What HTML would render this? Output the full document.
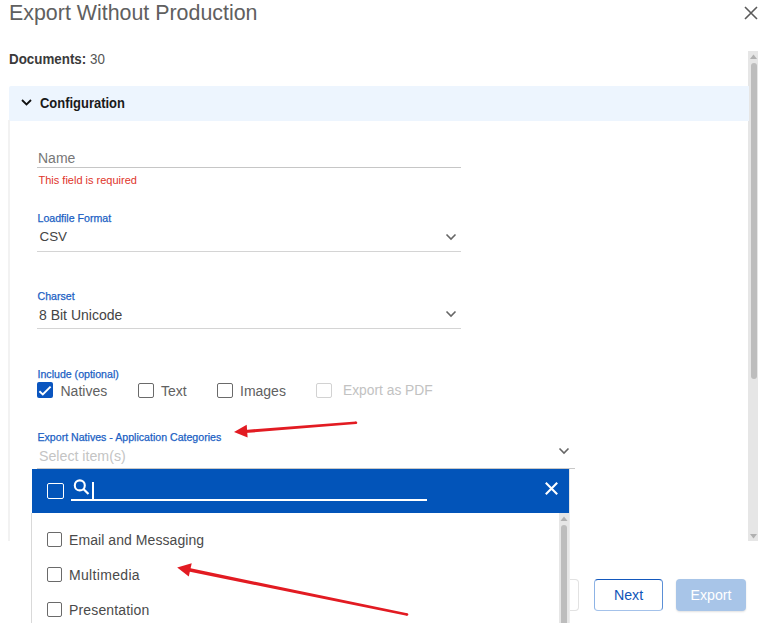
<!DOCTYPE html>
<html><head><meta charset="utf-8">
<style>
*{box-sizing:border-box;margin:0;padding:0}
html,body{width:774px;height:642px;overflow:hidden;background:#fff;font-family:"Liberation Sans",sans-serif;position:relative}
.a{position:absolute;white-space:nowrap}
.title{left:9px;top:1px;font-size:21.4px;color:#606060;line-height:24px}
.docs{left:9px;top:50.8px;font-size:14.5px;color:#555;line-height:16px;transform:scaleX(0.922);transform-origin:0 50%}
.docs b{color:#3a3a3a}
.band{left:8.5px;top:86px;width:740.2px;border-top-left-radius:2px;height:34.5px;background:#edf5fe}
.cfg{left:40px;top:95px;font-size:14px;font-weight:bold;color:#1a1a1a;line-height:16px;transform:scaleX(0.925);transform-origin:0 50%}
.pleft{left:8px;top:120px;width:2px;height:421px;background:#f2f2f2}
.lbl{font-size:10.6px;color:#1b5fc4;line-height:12px;-webkit-text-stroke:0.25px #1b5fc4}
.val{font-size:14px;color:#444;line-height:16px}
.uline{height:1px;background:#d4d4d4}
.cb{width:15.5px;height:15px;border:1.75px solid #6a6a6a;border-radius:2px;background:#fff}
.item{font-size:14px;color:#4a4a4a;line-height:16px}
.btn{height:32px;border-radius:4px;font-size:14px;line-height:30px;text-align:center}
</style></head><body>
<div class="a title">Export Without Production</div>
<svg class="a" style="left:744px;top:6px" width="14" height="14" viewBox="0 0 14 14"><path d="M1 1L13 13M13 1L1 13" stroke="#5a5a5a" stroke-width="1.6"/></svg>
<div class="a docs"><b>Documents:</b> 30</div>

<!-- main scrollbar -->
<div class="a" style="left:748px;top:51px;width:10px;height:490px;background:#e6e6e6"></div>
<svg class="a" style="left:749px;top:53px" width="9" height="7" viewBox="0 0 9 7"><path d="M1 6L4.5 1.5L8 6Z" fill="#b0b0b0"/></svg>
<div class="a" style="left:751px;top:63px;width:6px;height:316px;background:#bdbdbd;border-radius:3px"></div>
<svg class="a" style="left:749px;top:533px" width="9" height="7" viewBox="0 0 9 7"><path d="M1 1L4.5 5.5L8 1Z" fill="#b0b0b0"/></svg>

<div class="a band"></div>
<svg class="a" style="left:21px;top:99px" width="11" height="7" viewBox="0 0 11 7"><path d="M1 1L5.5 5.5L10 1" stroke="#111" stroke-width="1.8" fill="none"/></svg>
<div class="a cfg">Configuration</div>
<div class="a pleft"></div>

<div class="a" style="left:38px;top:150px;font-size:14px;color:#777;line-height:16px">Name</div>
<div class="a uline" style="left:37px;top:167px;width:424px;background:#c6c6c6"></div>
<div class="a" style="left:38.5px;top:173.7px;font-size:11px;color:#e0342a;line-height:12px">This field is required</div>

<div class="a lbl" style="left:37.5px;top:211.9px">Loadfile Format</div>
<div class="a val" style="left:39.5px;top:229px;font-size:13.4px">CSV</div>
<svg class="a" style="left:445px;top:233px" width="12" height="8" viewBox="0 0 12 8"><path d="M1.5 1.5L6 6L10.5 1.5" stroke="#666" stroke-width="1.6" fill="none"/></svg>
<div class="a uline" style="left:37px;top:251px;width:424px"></div>

<div class="a lbl" style="left:37.5px;top:290px">Charset</div>
<div class="a val" style="left:39px;top:306.5px">8 Bit Unicode</div>
<svg class="a" style="left:445px;top:310px" width="12" height="8" viewBox="0 0 12 8"><path d="M1.5 1.5L6 6L10.5 1.5" stroke="#666" stroke-width="1.6" fill="none"/></svg>
<div class="a uline" style="left:37px;top:328px;width:424px"></div>

<div class="a lbl" style="left:37.5px;top:367.9px">Include (optional)</div>
<div class="a" style="left:37px;top:382px;width:16px;height:16px;background:#0a55bf;border-radius:2px"></div>
<svg class="a" style="left:37px;top:382px" width="16" height="16" viewBox="0 0 16 16"><path d="M2.4 9.25L5.8 12.4L13.6 4.6" stroke="#fff" stroke-width="1.9" fill="none"/></svg>
<div class="a val" style="left:60.5px;top:382.5px;color:#616161">Natives</div>
<div class="a cb" style="left:138px;top:382.5px"></div>
<div class="a val" style="left:161px;top:382.5px;color:#616161">Text</div>
<div class="a cb" style="left:217px;top:382.5px"></div>
<div class="a val" style="left:240px;top:382.5px;color:#616161">Images</div>
<div class="a cb" style="left:316px;top:382.5px;border-color:#d2d2d2"></div>
<div class="a val" style="left:343px;top:382.5px;color:#c2c2c2;font-size:13.8px">Export as PDF</div>

<div class="a lbl" style="left:37.5px;top:430.7px">Export Natives - Application Categories</div>
<div class="a val" style="left:39px;top:447.8px;color:#c4c4c4;font-size:14.2px">Select item(s)</div>
<svg class="a" style="left:558px;top:447px" width="12" height="8" viewBox="0 0 12 8"><path d="M1.5 1.5L6 6L10.5 1.5" stroke="#666" stroke-width="1.6" fill="none"/></svg>
<div class="a uline" style="left:37px;top:468px;width:538px;background:#c8c8c8"></div>

<div class="a btn" style="left:555px;top:579px;width:24px;border:1px solid #e2e2e2;border-left:none"></div>
<!-- dropdown -->
<div class="a" style="left:569px;top:469px;width:1px;height:154px;background:#e6e6e6"></div>
<div class="a" style="left:32px;top:469px;width:537px;height:44px;background:#0254b9"></div>
<div class="a" style="left:47px;top:483px;width:16.5px;height:15.7px;border:1.8px solid #fff;border-radius:2px"></div>
<div class="a" style="left:71px;top:499px;width:356px;height:2px;background:#fff"></div>
<svg class="a" style="left:70px;top:476px" width="22" height="22" viewBox="0 0 22 22"><circle cx="9.8" cy="9.4" r="5" stroke="#fff" stroke-width="2.1" fill="none"/><path d="M13.4 13L18.5 18" stroke="#fff" stroke-width="2.2"/></svg>
<div class="a" style="left:92.3px;top:482px;width:1.7px;height:18px;background:#fff"></div>
<svg class="a" style="left:544px;top:481px" width="15" height="15" viewBox="0 0 15 15"><path d="M1.8 1.8L13.2 13.2M13.2 1.8L1.8 13.2" stroke="#fff" stroke-width="2.1"/></svg>

<div class="a" style="left:31px;top:513px;width:539px;height:110px;background:#fff;border-left:1px solid #d9d9d9;border-right:1px solid #ececec"></div>
<div class="a" style="left:559px;top:513px;width:10px;height:110px;background:#e6e6e6"></div>
<svg class="a" style="left:559px;top:514px" width="10" height="8" viewBox="0 0 10 8"><path d="M1.5 7L5 2.5L8.5 7Z" fill="#b0b0b0"/></svg>
<div class="a" style="left:561px;top:525px;width:6px;height:98px;background:#bdbdbd;border-radius:3px 3px 0 0"></div>
<div class="a cb" style="left:46.5px;top:532.3px;width:15px"></div>
<div class="a item" style="left:69px;top:532px;letter-spacing:0.07px">Email and Messaging</div>
<div class="a cb" style="left:46.5px;top:567.3px;width:15px"></div>
<div class="a item" style="left:69px;top:567px;letter-spacing:0.33px">Multimedia</div>
<div class="a cb" style="left:46.5px;top:602.3px;width:15px"></div>
<div class="a item" style="left:69px;top:602px;letter-spacing:0.15px">Presentation</div>

<div class="a btn" style="left:594px;top:579px;width:69px;height:32px;border:1px solid;border-color:#1358bd #5b8fd6 #a4c2ea #8db3e5;color:#0f55b8;line-height:31px;font-size:14.2px">Next</div>
<div class="a btn" style="left:676px;top:579px;width:70px;background:#a8c5e8;color:#fff;box-shadow:0 1px 2px rgba(0,0,0,0.12);line-height:32px;font-size:14.2px">Export</div>

<svg class="a" style="left:0;top:0" width="774" height="642" viewBox="0 0 774 642">
<path d="M245.13 433.1L244.87 429.9L355.9 421.45L356.1 423.95Z" fill="#e21b22"/><circle cx="356" cy="422.7" r="1.25" fill="#e21b22"/>
<path d="M234 432L246.7 424.8L247.6 437.5Z" fill="#e21b22"/>
<path d="M188.65 571.5L189.35 568.09L407.26 613.23L406.74 615.77Z" fill="#e21b22"/><circle cx="407" cy="614.5" r="1.3" fill="#e21b22"/>
<path d="M177.2 567.4L191.7 563.2L188.8 576.4Z" fill="#e21b22"/>
</svg>
</body></html>
